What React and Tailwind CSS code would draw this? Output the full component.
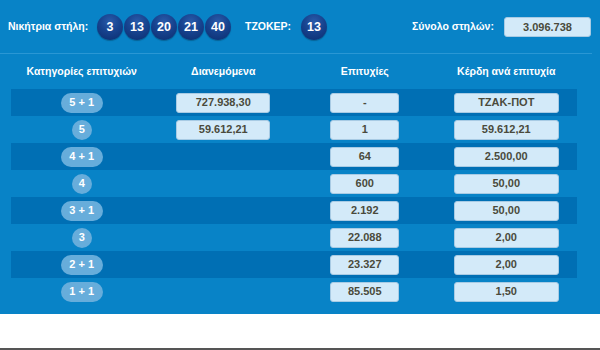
import React from "react";

const numbers = [3, 13, 20, 21, 40];

const rows = [
  { cat: "5 + 1", dist: "727.938,30", wins: "-", prize: "ΤΖΑΚ-ΠΟΤ" },
  { cat: "5", dist: "59.612,21", wins: "1", prize: "59.612,21" },
  { cat: "4 + 1", dist: null, wins: "64", prize: "2.500,00" },
  { cat: "4", dist: null, wins: "600", prize: "50,00" },
  { cat: "3 + 1", dist: null, wins: "2.192", prize: "50,00" },
  { cat: "3", dist: null, wins: "22.088", prize: "2,00" },
  { cat: "2 + 1", dist: null, wins: "23.327", prize: "2,00" },
  { cat: "1 + 1", dist: null, wins: "85.505", prize: "1,50" },
];

function Ball({ n }) {
  return (
    <div className="w-[26px] h-[26px] rounded-full flex items-center justify-center text-white font-bold text-[12.5px] bg-[radial-gradient(circle_at_50%_30%,#2a5cab_0%,#17438f_45%,#0b2d6e_100%)] shadow-[0_1px_1px_rgba(0,0,0,0.25)]">
      {n}
    </div>
  );
}

function Cell({ children, width }) {
  return (
    <div
      className={`${width} h-[20px] rounded-[3px] bg-[#d3eaf9] border border-[#a8cbe4] flex items-center justify-center text-[#4a4a3c] font-bold text-[11px]`}
    >
      {children}
    </div>
  );
}

function Pill({ label }) {
  const single = label.length === 1;
  return (
    <div
      className={`${single ? "w-[20px]" : "w-[42px]"} h-[20px] rounded-full bg-[#67addb] flex items-center justify-center text-white font-bold text-[11px] whitespace-pre`}
    >
      {label}
    </div>
  );
}

export default function App() {
  return (
    <div
      className="w-[600px] h-[350px] bg-white flex flex-col"
      style={{ fontFamily: '"Liberation Sans", Arial, sans-serif' }}
    >
      <div className="h-[314px] bg-[#0883c7] flex flex-col">
        {/* top line: winning numbers */}
        <div className="h-[53px] flex items-center pl-[8px] pt-[1px] text-white font-bold text-[10.5px] whitespace-nowrap">
          <span className="w-[89px]">Νικήτρια στήλη:</span>
          <div className="flex gap-[1px]">
            {numbers.map((n) => (
              <Ball key={n} n={n} />
            ))}
          </div>
          <span className="ml-[14px] w-[56px]">ΤΖΟΚΕΡ:</span>
          <Ball n={13} />
          <span className="ml-[85px] w-[92px]">Σύνολο στηλών:</span>
          <div className="w-[87px] h-[20px] rounded-[3px] bg-[#d3eaf9] border border-[#a8cbe4] flex items-center justify-center text-[#4a4a3c] font-bold text-[11px]">
            3.096.738
          </div>
        </div>
        <div className="h-[1px] w-[592px] bg-[#2a97d4]" />

        {/* column headers */}
        <div className="ml-[11px] w-[566px] h-[35px] grid grid-cols-4 items-center text-center text-white font-bold text-[10.5px] whitespace-nowrap">
          <span>Κατηγορίες επιτυχιών</span>
          <span>Διανεμόμενα</span>
          <span>Επιτυχίες</span>
          <span>Κέρδη ανά επιτυχία</span>
        </div>

        {/* results */}
        <div className="ml-[11px] w-[566px] flex flex-col">
          {rows.map((r, i) => (
            <div
              key={r.cat}
              className={`h-[27px] grid grid-cols-4 items-center justify-items-center ${i % 2 === 0 ? "bg-[#006fb4]" : ""}`}
            >
              <Pill label={r.cat} />
              {r.dist ? <Cell width="w-[94px]">{r.dist}</Cell> : <div />}
              <Cell width="w-[69px]">{r.wins}</Cell>
              <Cell width="w-[105px]">{r.prize}</Cell>
            </div>
          ))}
        </div>
      </div>
      <div className="flex-1" />
      <div className="h-[2px] bg-[#555555]" />
    </div>
  );
}
